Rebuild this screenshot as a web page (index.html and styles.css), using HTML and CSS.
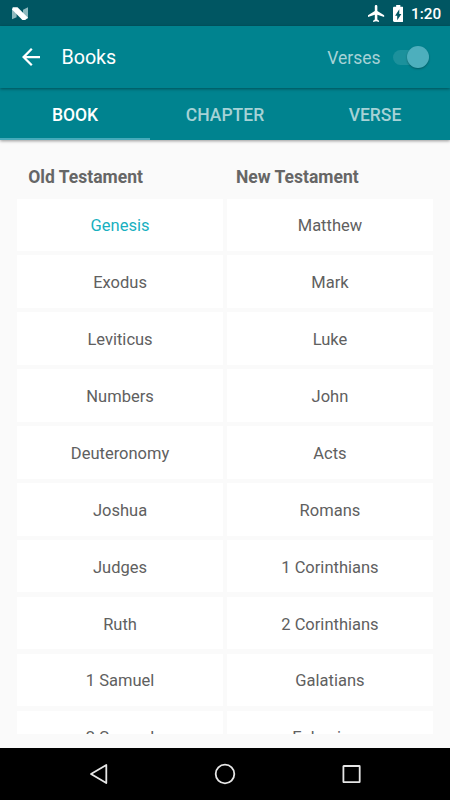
FILE: index.html
```html
<!DOCTYPE html>
<html lang="en">
<head>
<meta charset="utf-8">
<title>Books</title>
<link rel="stylesheet" href="styles.css">
</head>
<body>
<div class="status">
  <svg class="logo" width="16" height="13" viewBox="0 0 16 13"><path d="M0 1.800L4.600 3v7.200L0 12.200zM11 2.800L16 .3v11.200l-5-1.300z" fill="#8eb9be"/><path d="M.8.3h4.700L16 10.800 13.200 13h-2.800L0 2.600z" fill="#fff"/></svg>
  <svg class="plane" width="17" height="17" viewBox="2 2 20 20"><path fill="#fff" d="M21 16v-2l-8-5V3.500c0-.83-.67-1.500-1.500-1.500S10 2.670 10 3.500V9l-8 5v2l8-2.500V19l-2 1.500V22l3.500-1 3.500 1v-1.500L13 19v-5.500l8 2.500z"/></svg>
  <svg class="battery" width="10.500" height="17" viewBox="7 2 10 20" preserveAspectRatio="none"><path fill="#fff" fill-rule="evenodd" d="M15.670 4H14V2h-4v2H8.330C7.600 4 7 4.600 7 5.330v15.330C7 21.400 7.600 22 8.330 22h7.330c.74 0 1.340-.6 1.340-1.330V5.330C17 4.600 16.400 4 15.670 4zM11 20v-5.500H9L13 7v5.500h2L11 20z"/></svg>
  <span class="clock">1:20</span>
</div>
<header class="toolbar">
  <svg class="back" width="18" height="18" viewBox="4 4 16 16"><path fill="#fff" d="M20 11H7.830l5.590-5.590L12 4l-8 8 8 8 1.410-1.410L7.830 13H20v-2z"/></svg>
  <h1 class="title">Books</h1>
  <span class="label">Verses</span>
  <span class="switch"><span class="thumb"></span></span>
</header>
<nav class="tabs">
  <span class="tab active">BOOK</span><span class="tab">CHAPTER</span><span class="tab">VERSE</span>
</nav>
<main class="content">
  <div class="headings"><h2>Old Testament</h2><h2>New Testament</h2></div>
  <div class="books">
    <div class="book selected">Genesis</div><div class="book">Matthew</div>
    <div class="book">Exodus</div><div class="book">Mark</div>
    <div class="book">Leviticus</div><div class="book">Luke</div>
    <div class="book">Numbers</div><div class="book">John</div>
    <div class="book">Deuteronomy</div><div class="book">Acts</div>
    <div class="book">Joshua</div><div class="book">Romans</div>
    <div class="book">Judges</div><div class="book">1 Corinthians</div>
    <div class="book">Ruth</div><div class="book">2 Corinthians</div>
    <div class="book">1 Samuel</div><div class="book">Galatians</div>
    <div class="book">2 Samuel</div><div class="book">Ephesians</div>
  </div>
</main>
<footer class="navbar">
  <svg width="20" height="22" viewBox="0 0 20 22"><path d="M2 11L17.300 2v18z"/></svg>
  <svg width="22" height="22" viewBox="0 0 22 22"><circle cx="11" cy="11" r="9.300"/></svg>
  <svg width="20" height="20" viewBox="0 0 20 20"><rect x="2.400" y="2" width="16.300" height="16.200" rx=".4"/></svg>
</footer>
</body>
</html>
```
FILE: styles.css
```css
* { box-sizing: border-box; }
body {
  margin: 0;
  width: 450px;
  height: 800px;
  overflow: hidden;
  display: flex;
  flex-direction: column;
  background: #fafafa;
  color: #606060;
  font-family: Roboto, sans-serif;
}
h1, h2 { margin: 0; }
.status {
  flex: none;
  height: 26px;
  background: #005662;
  display: flex;
  align-items: center;
  padding: 1px 9px 0 12px;
}
.plane { margin-left: auto; }
.battery { margin-left: 8px; }
.clock {
  width: 30px;
  margin-left: 8px;
  color: #fff;
  font-size: 15.3px;
  font-weight: 500;
  white-space: nowrap;
}
.toolbar {
  flex: none;
  position: relative;
  z-index: 2;
  height: 62px;
  background: #00838f;
  box-shadow: 0 1px 3px rgba(0, 0, 0, .4);
  display: flex;
  align-items: center;
  padding: 0 21.5px 0 22px;
}
.title {
  margin-left: 21.4px;
  padding-top: 1px;
  color: #fff;
  font-size: 19.7px;
  font-weight: 400;
}
.label {
  margin-left: auto;
  padding-top: 1px;
  color: #a6d2d6;
  font-size: 17.5px;
}
.switch {
  position: relative;
  width: 36px;
  height: 15px;
  margin-left: 12px;
  border-radius: 8px;
  background: #1c919c;
}
.thumb {
  position: absolute;
  right: 0;
  top: -4px;
  width: 22px;
  height: 22px;
  border-radius: 50%;
  background: #4dafbd;
  box-shadow: 0 1px 2px rgba(0, 0, 0, .3);
}
.tabs {
  flex: none;
  position: relative;
  z-index: 1;
  height: 52px;
  display: grid;
  grid-template-columns: repeat(3, 1fr);
  background: #00838f;
  box-shadow: 0 1px 3px rgba(0, 0, 0, .4);
}
.tab {
  display: flex;
  align-items: center;
  justify-content: center;
  padding-top: 3px;
  border-bottom: 2px solid transparent;
  color: #a6d2d6;
  font-size: 17.5px;
  font-weight: 500;
}
.tab.active {
  color: #fff;
  border-color: #46abbb;
}
.content {
  flex: 1;
  min-height: 0;
  display: flex;
  flex-direction: column;
  padding: 26px 17.3px 13.5px;
}
.headings {
  display: grid;
  grid-template-columns: 1fr 1fr;
  height: 32.6px;
  flex: none;
}
.headings h2 {
  padding-left: 11px;
  font-size: 17.5px;
  line-height: 22px;
  font-weight: 700;
  color: #666;
}
.books {
  flex: 1;
  min-height: 0;
  overflow: hidden;
  display: grid;
  grid-template-columns: 1fr 1fr;
  grid-auto-rows: 52.5px;
  gap: 4.4px;
}
.book {
  display: flex;
  align-items: center;
  justify-content: center;
  padding-top: 2px;
  background: #fff;
  font-size: 16.5px;
}
.selected { color: #18b0bf; }
.navbar {
  flex: none;
  height: 52.5px;
  display: grid;
  grid-template-columns: 126px 126px 126px;
  justify-content: center;
  align-items: center;
  justify-items: center;
  background: #000;
}
.navbar svg {
  fill: none;
  stroke: #e6e6e6;
  stroke-width: 1.8;
  stroke-linejoin: round;
}
```
